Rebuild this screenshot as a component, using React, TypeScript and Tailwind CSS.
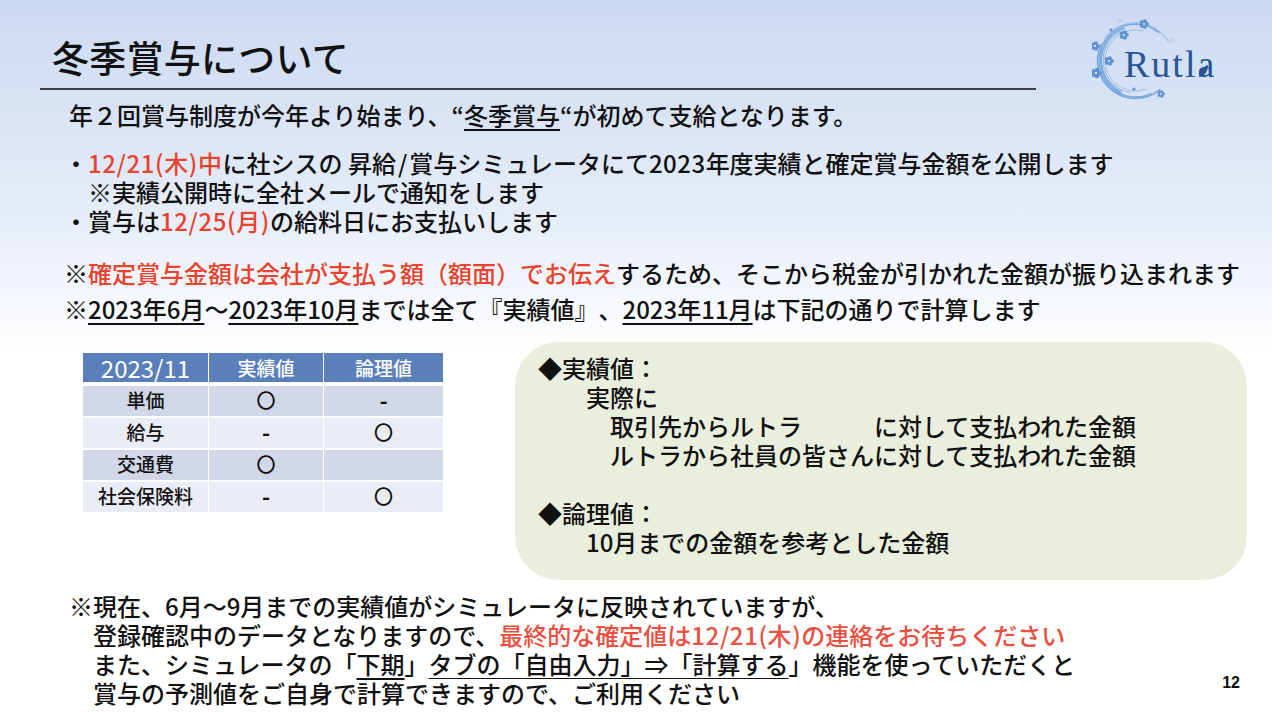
const RED = 'text-[#e8432e]'

function Flower({ x, y, s = 1 }: { x: number; y: number; s?: number }) {
  return (
    <g transform={`translate(${x} ${y}) scale(${s})`} fill="#5f93cf">
      {[0, 72, 144, 216, 288].map(a => (
        <circle key={a} cx={2.8 * Math.cos((a * Math.PI) / 180)} cy={2.8 * Math.sin((a * Math.PI) / 180)} r="2.1" />
      ))}
      <circle r="0.9" fill="#dbe6f6" />
    </g>
  )
}

// ring segment, counterclockwise from a0 to a1 (degrees, clockwise from +x)
function arc(r: number, a0: number, a1: number) {
  const cx = 43.5, cy = 50.5
  const p = (a: number) => `${(cx + r * Math.cos((a * Math.PI) / 180)).toFixed(1)} ${(cy + r * Math.sin((a * Math.PI) / 180)).toFixed(1)}`
  return `M ${p(a0)} A ${r} ${r} 0 ${a0 - a1 > 180 ? 1 : 0} 0 ${p(a1)}`
}

const rings: [number, number, number, number][] = [
  [38, 330, 215, 0.7],
  [36.5, 310, 65, 1.4],
  [34.5, 250, 115, 2],
  [32.5, 240, 100, 0.8],
  [30.5, 285, 70, 0.6],
  [38, 205, 50, 1.6],
]

function Logo() {
  return (
    <svg viewBox="0 0 130 90" className="w-[130px] h-[90px]">
      <g fill="none" stroke="#78a9de" strokeLinecap="round">
        {rings.map(([r, a0, a1, w]) => (
          <path key={`${r}-${a0}`} d={arc(r, a0, a1)} strokeWidth={w} />
        ))}
      </g>
      <Flower x={3} y={36} />
      <Flower x={17} y={51} />
      <Flower x={4} y={63} s={1.1} />
      <Flower x={32} y={25} />
      <Flower x={52} y={14} />
      <Flower x={69} y={84} s={0.8} />
      <circle cx="19" cy="20" r="1.6" fill="#5f93cf" />
      <circle cx="42" cy="79" r="1.6" fill="#5f93cf" />
      <circle cx="80" cy="30" r="2" fill="none" stroke="#9db8da" strokeWidth="0.6" />
      <circle cx="28" cy="11" r="1.6" fill="none" stroke="#9db8da" strokeWidth="0.6" />
      <text x="32" y="67" fontFamily="'Liberation Serif', serif" fontSize="38" fill="#265598" letterSpacing="2">Rutla</text>
      <path d="M 107 67 C 107 60 111 57 116 55 C 116 61 113 66 107 67 Z" fill="#265598" />
    </svg>
  )
}

const rows = [
  { name: '単価', actual: '〇', theory: '-' },
  { name: '給与', actual: '-', theory: '〇' },
  { name: '交通費', actual: '〇', theory: '' },
  { name: '社会保険料', actual: '-', theory: '〇' },
]

function Mark({ v }: { v: string }) {
  return <span className={v === '-' ? 'font-bold text-[22px]' : ''}>{v}</span>
}

function BonusTable() {
  return (
    <div className="w-[360px] ml-[83px] mt-[11px] text-[19px] leading-none font-medium">
      <div className="grid grid-cols-[125px_114px_119px] gap-x-px h-[29px] items-stretch text-white bg-white mb-[4px]">
        <div className="bg-[#5b7fbb] flex items-center justify-center text-[24px] font-normal">2023/11</div>
        <div className="bg-[#5b7fbb] flex items-center justify-center">実績値</div>
        <div className="bg-[#5b7fbb] flex items-center justify-center">論理値</div>
      </div>
      <div className="flex flex-col gap-[2px]">
        {rows.map((r, i) => {
          const bg = i % 2 === 0 ? 'bg-[#d1d7e7]' : 'bg-[#e9ecf4]'
          return (
            <div key={r.name} className="grid grid-cols-[125px_114px_119px] gap-x-px h-[30px]">
              <div className={`${bg} flex items-center justify-center pb-[4px]`}>{r.name}</div>
              <div className={`${bg} flex items-center justify-center pb-[4px]`}><Mark v={r.actual} /></div>
              <div className={`${bg} flex items-center justify-center pb-[4px]`}><Mark v={r.theory} /></div>
            </div>
          )
        })}
      </div>
    </div>
  )
}

export default function App() {
  return (
    <div
      className="w-[1272px] h-[713px] overflow-hidden flex flex-col text-[24px] leading-[29px] font-medium text-[#111] [text-spacing-trim:space-all] bg-[linear-gradient(180deg,#cbd9f1_0%,#e6edf9_30%,#ffffff_50%,#ffffff_100%)]"
      style={{ fontFamily: '"Noto Sans CJK JP", "Noto Sans", sans-serif' }}
    >
      {/* Header */}
      <div className="flex h-[88px] pl-[52px] pr-[50px] justify-between items-start">
        <div className="text-[37px] leading-[54px] mt-[30px] tracking-[0.25px]">冬季賞与について</div>
        <div className="mt-[10px]"><Logo /></div>
      </div>
      <div className="h-[2px] w-[996px] ml-[40px] bg-[#404040]" />

      <div className="pl-[69px] mt-[10px]">
        年２回賞与制度が今年より始まり、“<span className="underline underline-offset-4">冬季賞与</span>“が初めて支給となります。
      </div>

      <div className="pl-[64px] mt-[19px]">
        <div>・<span className={`${RED} tracking-[0.6px]`}>12/21(木)中</span>に社シスの 昇給<span className="px-[2px]">/</span>賞与シミュレータにて<span className="tracking-[0.5px]">2023</span>年度実績と確定賞与金額を公開します</div>
        <div className="pl-[24px]">※実績公開時に全社メールで通知をします</div>
        <div>・賞与は<span className={`${RED} tracking-[0.6px]`}>12/25(月)</span>の給料日にお支払いします</div>
      </div>

      <div className="pl-[64px] mt-[23px] flex flex-col gap-[7px]">
        <div>※<span className={RED}>確定賞与金額は会社が支払う額（額面）でお伝え</span>するため、そこから税金が引かれた金額が振り込まれます</div>
        <div>
          ※<span className="underline underline-offset-4">2023年6月</span>～<span className="underline underline-offset-4">2023年10月</span>までは全て『実績値』、<span className="underline underline-offset-4">2023年11月</span>は下記の通りで計算します
        </div>
      </div>

      <div className="flex mt-[19px]">
        <BonusTable />
        <div className="ml-[72px] w-[732px] h-[238px] rounded-[44px] bg-[#e9eedd] pt-[11px] pl-[23px]">
          <div>◆実績値：</div>
          <div className="pl-[48px]">実際に</div>
          <div className="pl-[72px]">取引先からルトラ　　　に対して支払われた金額</div>
          <div className="pl-[72px]">ルトラから社員の皆さんに対して支払われた金額</div>
          <div className="h-[29px]" />
          <div>◆論理値：</div>
          <div className="pl-[48px]">10月までの金額を参考とした金額</div>
        </div>
      </div>

      <div className="flex justify-between items-end pl-[69px] pr-[32px] mt-[11px]">
        <div>
          <div>※現在、6月～9月までの実績値がシミュレータに反映されていますが、</div>
          <div className="pl-[24px]">登録確認中のデータとなりますので、<span className="text-[#e8503f]">最終的な確定値は<span className="tracking-[0.6px]">12/21(木)</span>の連絡をお待ちください</span></div>
          <div className="pl-[24px]">また、シミュレータの「<span className="underline underline-offset-4">下期</span>」<span className="underline underline-offset-4 decoration-1">タブの「自由入力」⇒「計算する</span>」機能を使っていただくと</div>
          <div className="pl-[24px]">賞与の予測値をご自身で計算できますので、ご利用ください</div>
        </div>
        <div className="text-[16px] leading-[18px] mb-[15px] font-bold" style={{ fontFamily: '"Liberation Sans", sans-serif' }}>12</div>
      </div>
    </div>
  )
}
